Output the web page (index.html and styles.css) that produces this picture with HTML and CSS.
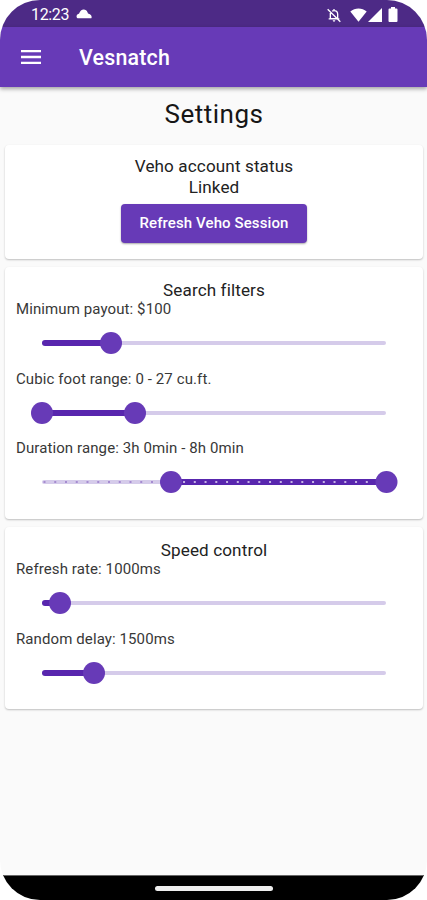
FILE: index.html
```html
<!DOCTYPE html>
<html lang="en">
<head>
<meta charset="utf-8">
<title>Vesnatch</title>
<link rel="stylesheet" href="styles.css">
</head>
<body>
<div class="phone">
  <header class="statusbar">
    <span class="clock">12:23</span>
    <svg class="cloud" width="16" height="10" viewBox="0 0 16 10"><path fill="#fff" d="M1.500 9.300C-.3 8 .5 5.200 3 4.800 4 1.800 6 .3 8 .5 10.500.7 11.300 2.500 12 4.600 14.500 5 16.500 7.300 15.300 9.300Z"/></svg>
    <svg class="bell" width="16" height="16" viewBox="0 0 24 24"><path fill="none" stroke="#fff" stroke-width="2" d="M6.500 9v8.500h11V11c0-3.500-2.200-5.500-5.500-5.500-1 0-2 .2-2.800.7M4 17.700h16M12 3v3M2.500 3.500 21.500 22"/><path fill="#fff" d="M10 20h4a2 2 0 0 1-4 0Z"/></svg>
    <svg class="wifi" width="17" height="14" viewBox="0 0 17 14"><path fill="#fff" d="M.3 3.500C5 -.6 12 -.6 16.700 3.500L8.500 13.800Z"/></svg>
    <svg class="signal" width="14" height="14" viewBox="0 0 14 14"><path fill="#fff" d="M14 0v14H0Z"/></svg>
    <svg class="battery" width="10" height="15" viewBox="0 0 10 15"><path fill="#fff" d="M3 0h4v1.500h1.500a1 1 0 0 1 1 1V14a1 1 0 0 1-1 1h-7a1 1 0 0 1-1-1V2.500a1 1 0 0 1 1-1H3Z"/></svg>
  </header>
  <nav class="appbar">
    <svg class="menu" width="20" height="14" viewBox="0 0 20 14"><path stroke="#fff" stroke-width="2.300" d="M0 1.200h20M0 7h20M0 12.800h20"/></svg>
    <span class="brand">Vesnatch</span>
  </nav>
  <main class="content">
    <h1 class="title">Settings</h1>
    <section class="card account">
      <p class="heading status">Veho account status</p>
      <p class="heading linked">Linked</p>
      <button class="refresh">Refresh Veho Session</button>
    </section>
    <section class="card filters">
      <h2 class="heading search">Search filters</h2>
      <p class="label payout">Minimum payout: $100</p>
      <svg class="slider" width="366" height="24" viewBox="0 0 366 24"><path class="track" d="M13 12h340"/><path class="active" d="M14 12h66"/><circle class="thumb" cx="80" cy="12" r="11"/></svg>
      <p class="label cubic">Cubic foot range: 0 - 27 cu.ft.</p>
      <svg class="slider" width="366" height="24" viewBox="0 0 366 24"><path class="track" d="M13 12h340"/><path class="active" d="M11 12h93"/><circle class="thumb" cx="11" cy="12" r="11"/><circle class="thumb" cx="104" cy="12" r="11"/></svg>
      <p class="label duration">Duration range: 3h 0min - 8h 0min</p>
      <svg class="slider" width="367" height="24" viewBox="0 0 367 24"><path class="track" d="M13 12h340"/><path class="active" d="M140 12h215"/><path class="tick" d="M12.500 12h129"/><path class="tick light" d="M141.300 12h215"/><circle class="thumb" cx="140" cy="12" r="11"/><circle class="thumb" cx="355.500" cy="12" r="11"/></svg>
    </section>
    <section class="card speed">
      <h2 class="heading control">Speed control</h2>
      <p class="label rate">Refresh rate: 1000ms</p>
      <svg class="slider" width="366" height="24" viewBox="0 0 366 24"><path class="track" d="M13 12h340"/><path class="active" d="M14 12h15"/><circle class="thumb" cx="29" cy="12" r="11"/></svg>
      <p class="label delay">Random delay: 1500ms</p>
      <svg class="slider" width="366" height="24" viewBox="0 0 366 24"><path class="track" d="M13 12h340"/><path class="active" d="M14 12h49"/><circle class="thumb" cx="63" cy="12" r="11"/></svg>
    </section>
  </main>
  <footer class="navbar"><span class="handle"></span></footer>
</div>
</body>
</html>
```
FILE: styles.css
```css
* { box-sizing: border-box; }
body { margin: 0; background: #fff; font-family: Roboto, sans-serif; color: #222; }
h1, h2, p { margin: 0; font-weight: 400; white-space: nowrap; }
svg { display: block; flex: none; }

.phone { width: 427px; height: 900px; display: flex; flex-direction: column; background: #fafafa; border-radius: 40px; overflow: hidden; }

.statusbar { height: 27px; flex: none; display: flex; align-items: center; padding: 2px 29px 0 31px; background: #4d2a86; color: #fff; }
.clock { font-size: 16px; line-height: 20px; width: 45px; letter-spacing: -.35px; }
.cloud { margin-top: -2px; }
.bell { margin-left: auto; }
.wifi { margin-left: 8px; }
.signal { margin-left: 1px; }
.battery { margin-left: 6px; }

.appbar { height: 60px; flex: none; display: flex; align-items: center; padding-left: 21px; background: #673ab7; color: #fff; box-shadow: 0 2px 4px rgba(0,0,0,.35); z-index: 1; }
.brand { margin-left: 38px; font-size: 21.4px; font-weight: 500; letter-spacing: .2px; }

.content { flex: 1; padding: 0 4px 0 5px; }
.title { height: 58px; line-height: 54px; font-size: 26px; letter-spacing: .5px; text-align: center; color: #161616; }

.card { background: #fff; border-radius: 4px; box-shadow: 0 1px 2px rgba(0,0,0,.24); padding: 0 11px; margin-bottom: 8px; }
.account { height: 114px; display: flex; flex-direction: column; align-items: center; padding-top: 11px; }
.filters { height: 252px; padding-top: 12.500px; }
.speed { height: 182px; padding-top: 12.500px; }
.heading { font-size: 17.1px; line-height: 20.5px; letter-spacing: .12px; text-align: center; }
.label { font-size: 15px; line-height: 18px; letter-spacing: .1px; color: #383838; }

.refresh { margin-top: 6.500px; width: 186px; height: 39px; padding: 0; border: 0; border-radius: 4px; background: #673ab7; color: #fff; font: 500 15px Roboto, sans-serif; letter-spacing: .1px; box-shadow: 0 1px 2px rgba(0,0,0,.35); white-space: nowrap; }

.slider { margin: 13px 0 14.500px 15px; }
.track { stroke: #d5cbea; stroke-width: 4; stroke-linecap: round; }
.active { stroke: #5826ae; stroke-width: 6; stroke-linecap: round; }
.thumb { fill: #673ab7; }
.tick { stroke: #a58bd0; stroke-width: 2; stroke-dasharray: 2 8.750; }
.light { stroke: #c5b3e4; }

.navbar { height: 25px; flex: none; background: #000; display: flex; justify-content: center; align-items: center; border-top: 1px solid #666; }
.handle { width: 118px; height: 5px; border-radius: 3px; background: #eee; }
```
